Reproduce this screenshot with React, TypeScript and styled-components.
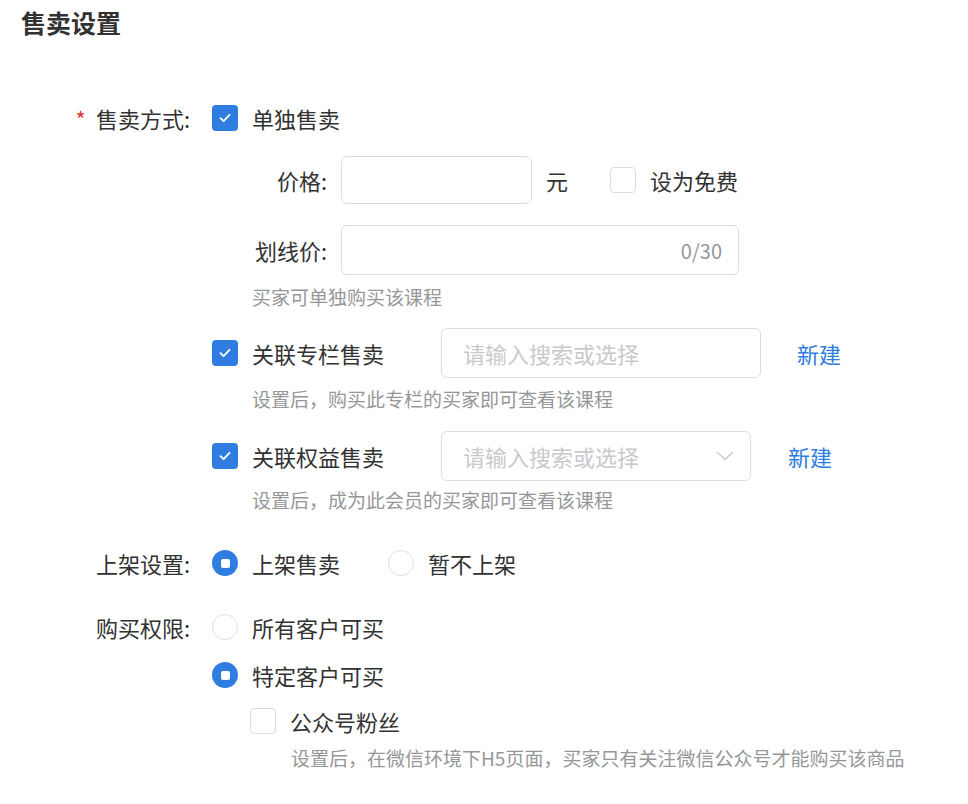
import React from "react";
import styled, { createGlobalStyle } from "styled-components";

const GlobalStyle = createGlobalStyle`
  html, body { margin: 0; padding: 0; background: #ffffff; }
  body {
    font-family: "Noto Sans CJK SC", "Noto Sans", sans-serif;
    color: #323233;
    -webkit-font-smoothing: antialiased;
  }
  * { box-sizing: border-box; }
`;

const BLUE = "#2f7de1";

const Page = styled.div`
  width: 968px;
  min-height: 804px;
  padding-top: 5px;
`;

const Title = styled.h1`
  margin: 0 0 0 21px;
  font-size: 25px;
  line-height: 34px;
  font-weight: 700;
  color: #323233;
`;

const Form = styled.div`
  margin-top: 64px;
  display: flex;
  flex-direction: column;
`;

const FormItem = styled.div<{ $mt?: number }>`
  display: grid;
  grid-template-columns: 212px 1fr;
  margin-top: ${(p) => p.$mt ?? 0}px;
`;

const Label = styled.div<{ $required?: boolean }>`
  height: 30px;
  line-height: 30px;
  font-size: 22px;
  color: #323233;
  text-align: right;
  padding-right: 22px;
  white-space: nowrap;
  &::before {
    content: ${(p) => (p.$required ? '"*"' : '""')};
    color: #e8342e;
    margin-right: 10px;
  }
`;

const Control = styled.div`
  display: flex;
  flex-direction: column;
`;

const Row = styled.div<{ $mt?: number; $h?: number; $indent?: number }>`
  display: flex;
  align-items: center;
  height: ${(p) => p.$h ?? 30}px;
  margin-top: ${(p) => p.$mt ?? 0}px;
  padding-left: ${(p) => p.$indent ?? 0}px;
`;

const Box = styled.span<{ $checked?: boolean }>`
  flex: none;
  width: 26px;
  height: 26px;
  border-radius: 4px;
  display: inline-flex;
  align-items: center;
  justify-content: center;
  background: ${(p) => (p.$checked ? BLUE : "#ffffff")};
  border: ${(p) => (p.$checked ? "none" : "1.5px solid #dcdee0")};
`;

const RadioDot = styled.span<{ $checked?: boolean }>`
  flex: none;
  width: 26px;
  height: 26px;
  border-radius: 50%;
  display: inline-flex;
  align-items: center;
  justify-content: center;
  background: ${(p) => (p.$checked ? BLUE : "#ffffff")};
  border: ${(p) => (p.$checked ? "none" : "1.5px solid #dcdee0")};
  &::after {
    content: "";
    display: ${(p) => (p.$checked ? "block" : "none")};
    width: 9px;
    height: 9px;
    border-radius: 2px;
    background: #ffffff;
  }
`;

const OptionText = styled.span`
  margin-left: 14px;
  font-size: 22px;
  line-height: 30px;
  color: #323233;
  white-space: nowrap;
`;

const Option = styled.label<{ $width?: number; $mr?: number; $ml?: number }>`
  display: inline-flex;
  align-items: center;
  width: ${(p) => (p.$width ? `${p.$width}px` : "auto")};
  margin-right: ${(p) => p.$mr ?? 0}px;
  margin-left: ${(p) => p.$ml ?? 0}px;
  flex: none;
`;

const SubLabel = styled.span`
  width: 115px;
  margin-right: 14px;
  text-align: right;
  font-size: 22px;
  color: #323233;
  white-space: nowrap;
`;

const InputBox = styled.div<{ $w: number; $h: number }>`
  flex: none;
  width: ${(p) => p.$w}px;
  height: ${(p) => p.$h}px;
  border: 1.5px solid #dcdee0;
  border-radius: 6px;
  display: flex;
  align-items: center;
  padding: 0 16px 0 21px;
  background: #fff;
`;

const Field = styled.input`
  flex: 1;
  min-width: 0;
  border: none;
  outline: none;
  background: transparent;
  font-family: inherit;
  font-size: 22px;
  color: #323233;
  padding: 0;
  &::placeholder { color: #c8c9cc; }
`;

const Suffix = styled.span`
  font-size: 20px;
  color: #969799;
`;

const Unit = styled.span`
  margin-left: 14px;
  font-size: 22px;
  color: #323233;
`;

const Link = styled.a<{ $ml: number }>`
  margin-left: ${(p) => p.$ml}px;
  font-size: 22px;
  color: ${BLUE};
  text-decoration: none;
  cursor: pointer;
`;

const Help = styled.div<{ $mt?: number; $indent: number }>`
  margin-top: ${(p) => p.$mt ?? 0}px;
  padding-left: ${(p) => p.$indent}px;
  font-size: 19px;
  line-height: 24px;
  color: #969799;
  white-space: nowrap;
`;

const Check = () => (
  <svg width="14" height="14" viewBox="0 0 14 14" fill="none">
    <polyline
      points="2.5,7.2 5.6,10.2 11.5,3.8"
      stroke="#ffffff"
      strokeWidth="1.8"
      strokeLinecap="round"
      strokeLinejoin="round"
    />
  </svg>
);

const Chevron = () => (
  <svg width="18" height="10" viewBox="0 0 18 10" fill="none">
    <polyline points="1,1 9,8.5 17,1" stroke="#c8c9cc" strokeWidth="1.4" />
  </svg>
);

const Checkbox = ({ checked }: { checked?: boolean }) => (
  <Box $checked={checked}>{checked ? <Check /> : null}</Box>
);

export default function App() {
  return (
    <Page>
      <GlobalStyle />
      <Title>售卖设置</Title>
      <Form>
        <FormItem>
          <Label $required>售卖方式:</Label>
          <Control>
            <Row>
              <Option>
                <Checkbox checked />
                <OptionText>单独售卖</OptionText>
              </Option>
            </Row>
            <Row $mt={23} $h={48}>
              <SubLabel>价格:</SubLabel>
              <InputBox $w={191} $h={48}>
                <Field />
              </InputBox>
              <Unit>元</Unit>
              <Option $ml={42}>
                <Checkbox />
                <OptionText>设为免费</OptionText>
              </Option>
            </Row>
            <Row $mt={21} $h={50}>
              <SubLabel>划线价:</SubLabel>
              <InputBox $w={398} $h={50}>
                <Field />
                <Suffix>0/30</Suffix>
              </InputBox>
            </Row>
            <Help $mt={10} $indent={40}>买家可单独购买该课程</Help>
            <Row $mt={19} $h={50}>
              <Option $width={229}>
                <Checkbox checked />
                <OptionText>关联专栏售卖</OptionText>
              </Option>
              <InputBox $w={320} $h={50}>
                <Field placeholder="请输入搜索或选择" />
              </InputBox>
              <Link $ml={36}>新建</Link>
            </Row>
            <Help $mt={9} $indent={40}>设置后，购买此专栏的买家即可查看该课程</Help>
            <Row $mt={20} $h={50}>
              <Option $width={229}>
                <Checkbox checked />
                <OptionText>关联权益售卖</OptionText>
              </Option>
              <InputBox $w={310} $h={50}>
                <Field placeholder="请输入搜索或选择" />
                <Chevron />
              </InputBox>
              <Link $ml={37}>新建</Link>
            </Row>
            <Help $mt={7} $indent={40}>设置后，成为此会员的买家即可查看该课程</Help>
          </Control>
        </FormItem>

        <FormItem $mt={36}>
          <Label>上架设置:</Label>
          <Control>
            <Row>
              <Option $mr={48}>
                <RadioDot $checked />
                <OptionText>上架售卖</OptionText>
              </Option>
              <Option>
                <RadioDot />
                <OptionText>暂不上架</OptionText>
              </Option>
            </Row>
          </Control>
        </FormItem>

        <FormItem $mt={34}>
          <Label>购买权限:</Label>
          <Control>
            <Row>
              <Option>
                <RadioDot />
                <OptionText>所有客户可买</OptionText>
              </Option>
            </Row>
            <Row $mt={18}>
              <Option>
                <RadioDot $checked />
                <OptionText>特定客户可买</OptionText>
              </Option>
            </Row>
            <Row $mt={16} $indent={38}>
              <Option>
                <Checkbox />
                <OptionText>公众号粉丝</OptionText>
              </Option>
            </Row>
            <Help $mt={10} $indent={79}>
              设置后，在微信环境下H5页面，买家只有关注微信公众号才能购买该商品
            </Help>
          </Control>
        </FormItem>
      </Form>
    </Page>
  );
}
